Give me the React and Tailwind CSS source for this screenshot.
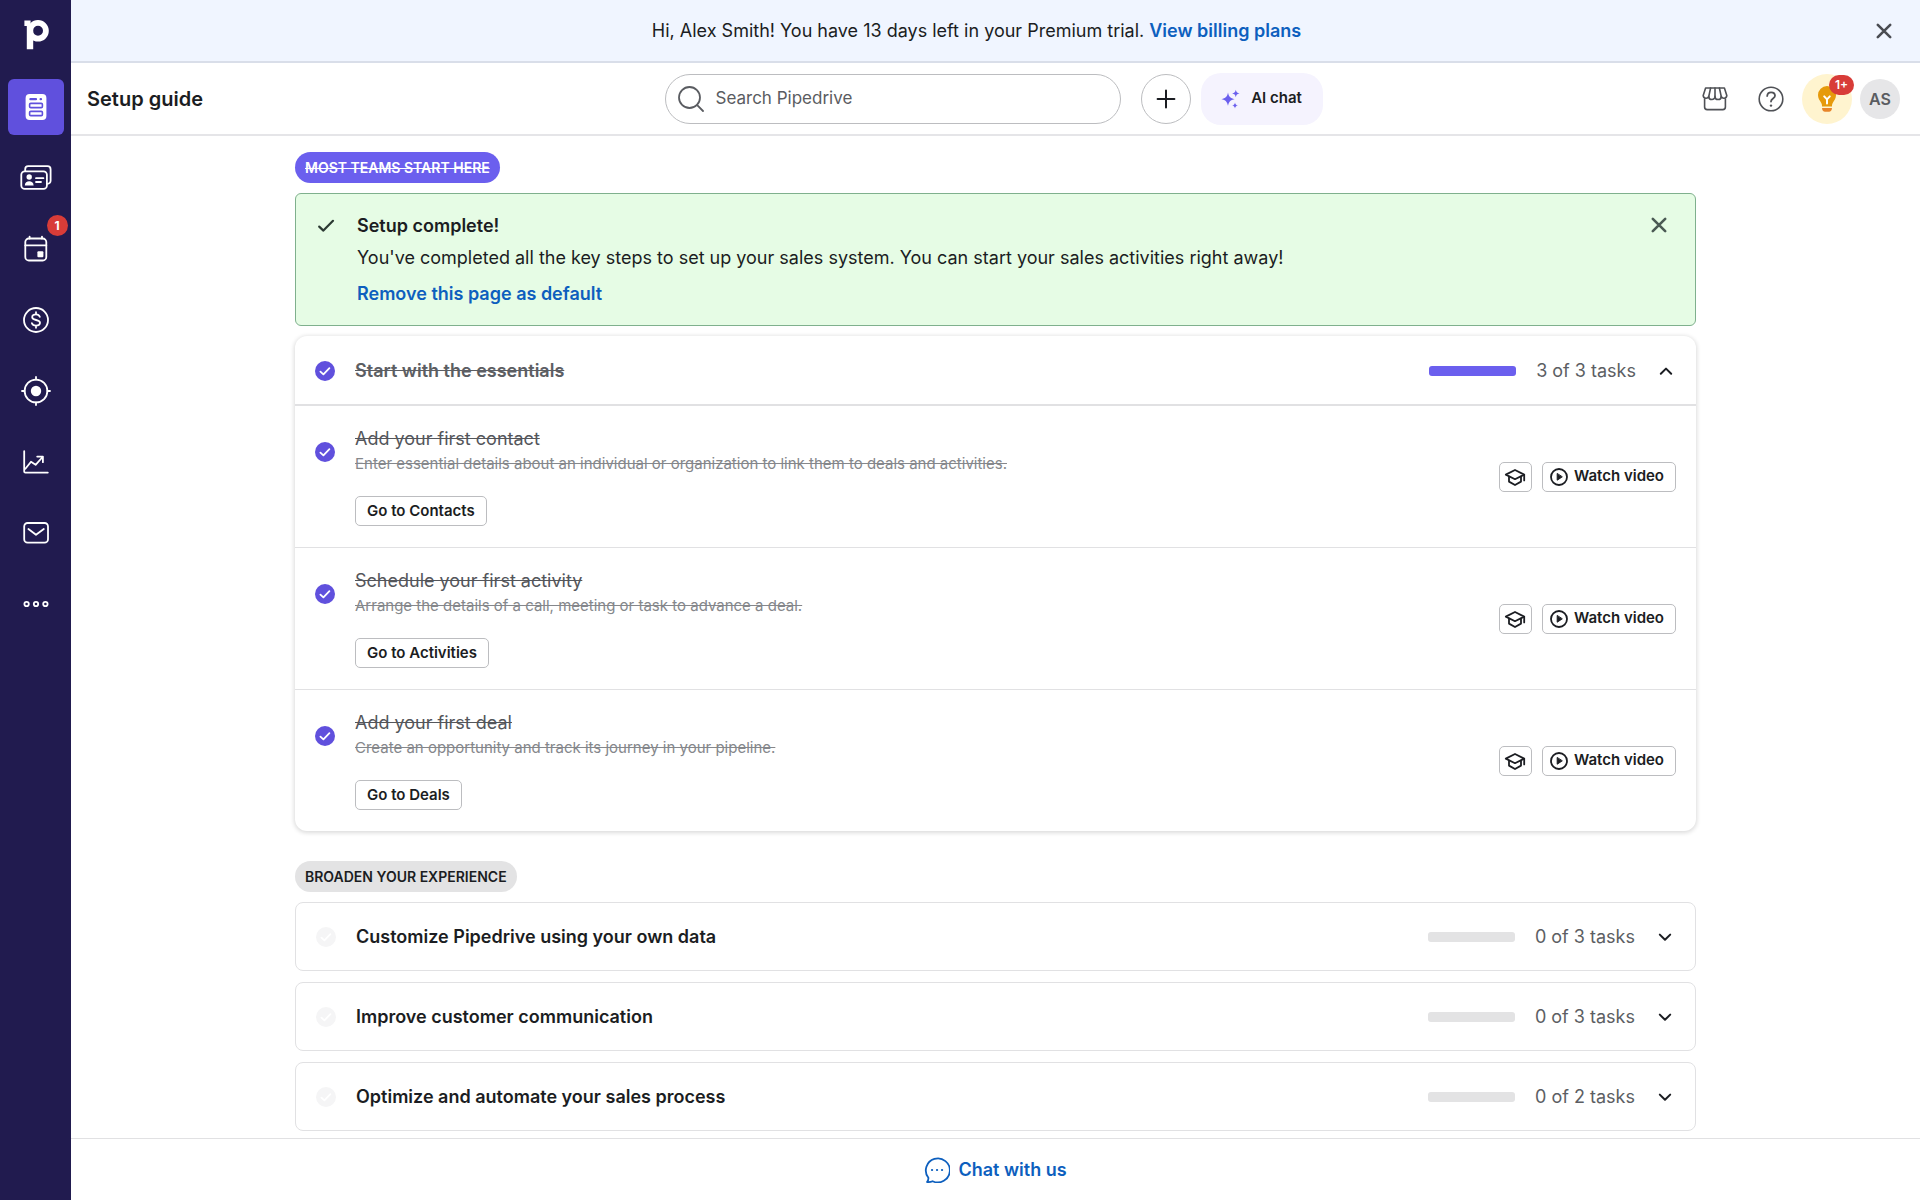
import { useState } from 'react';

const NAV_ITEMS = [
  { label: 'Setup guide', icon: GuideIcon, active: true },
  { label: 'Contacts', icon: ContactsIcon },
  { label: 'Activities', icon: CalendarIcon, badge: '1' },
  { label: 'Deals', icon: DealsIcon },
  { label: 'Leads', icon: TargetIcon },
  { label: 'Insights', icon: InsightsIcon },
  { label: 'Mail', icon: MailIcon },
  { label: 'More', icon: MoreIcon },
];

const ESSENTIALS = [
  {
    title: 'Add your first contact',
    description: 'Enter essential details about an individual or organization to link them to deals and activities.',
    action: 'Go to Contacts',
  },
  {
    title: 'Schedule your first activity',
    description: 'Arrange the details of a call, meeting or task to advance a deal.',
    action: 'Go to Activities',
  },
  {
    title: 'Add your first deal',
    description: 'Create an opportunity and track its journey in your pipeline.',
    action: 'Go to Deals',
  },
];

const SECTIONS = [
  { title: 'Customize Pipedrive using your own data', total: 3 },
  { title: 'Improve customer communication', total: 3 },
  { title: 'Optimize and automate your sales process', total: 2 },
];

function Icon({ size = 32, children, className = '' }) {
  return (
    <svg
      width={size}
      height={size}
      viewBox={`0 0 ${size} ${size}`}
      fill="none"
      stroke="currentColor"
      strokeWidth="1.8"
      strokeLinecap="round"
      strokeLinejoin="round"
      aria-hidden="true"
      className={`shrink-0 ${className}`}
    >
      {children}
    </svg>
  );
}

function Logo() {
  return (
    <svg width="26" height="30" viewBox="0 0 26 30" fill="none" aria-hidden="true">
      <circle cx="15" cy="10.8" r="7.9" stroke="white" strokeWidth="5.8" />
      <path d="M1.4 0.4H7.6V4H10.2V29.2H3.8V6H1.4Z" fill="white" />
    </svg>
  );
}

function GuideIcon() {
  return (
    <Icon>
      <rect x="5.6" y="3" width="20.8" height="26" rx="4" fill="white" stroke="none" />
      <g stroke="#6050dd" strokeWidth="1.6">
        <path d="M10.4 8.2H16M20.6 8.2H21" strokeWidth="2.2" />
        <rect x="9.6" y="12.4" width="12.8" height="4.2" rx="1.2" />
        <rect x="9.6" y="20.4" width="12.8" height="4.2" rx="1.2" />
      </g>
    </Icon>
  );
}

function ContactsIcon() {
  return (
    <Icon>
      <rect x="1.3" y="9.3" width="25.6" height="17.6" rx="3.4" />
      <path d="M5.2 8.8V7.2A3 3 0 0 1 8.2 4.2H27.4A3.2 3.2 0 0 1 30.6 7.4V18.8A3 3 0 0 1 27.6 21.8" />
      <circle cx="9.2" cy="15" r="2.7" fill="currentColor" stroke="none" />
      <path d="M4.8 23.4C4.8 17.8 13.6 17.8 13.6 23.4Z" fill="currentColor" stroke="none" />
      <path d="M16 16.2H23.4M16 20H21" />
    </Icon>
  );
}

function CalendarIcon() {
  return (
    <Icon>
      <rect x="5.3" y="5.5" width="21" height="22" rx="3.6" />
      <path d="M5.3 12.4H26.3M9.6 3.6V5.5M22 3.6V5.5" />
      <rect x="17.4" y="18.2" width="6" height="6" rx="1" fill="currentColor" stroke="none" />
    </Icon>
  );
}

function DealsIcon() {
  return (
    <Icon>
      <circle cx="16" cy="16" r="12" />
      <path d="M19.8 12.8C19.2 11.2 17.8 10.4 16 10.4C13.8 10.4 12.2 11.5 12.2 13.2C12.2 17 20 15 20 18.8C20 20.6 18.3 21.6 16 21.6C14 21.6 12.4 20.8 11.9 19.2M16 8.2V10.4M16 21.6V23.8" />
    </Icon>
  );
}

function TargetIcon() {
  return (
    <Icon>
      <circle cx="16" cy="16" r="11.4" />
      <circle cx="16" cy="16" r="5.2" fill="currentColor" stroke="none" />
      <path d="M16 2V4.6M16 27.4V30M2 16H4.6M27.4 16H30" />
    </Icon>
  );
}

function InsightsIcon() {
  return (
    <Icon>
      <path d="M4.2 5.2V25.4A1.2 1.2 0 0 0 5.4 26.6H27.8" />
      <path d="M5.4 22.8L11 15.8L15.6 18.8L22.6 11M17.2 10.6H22.9V16.2" />
    </Icon>
  );
}

function MailIcon() {
  return (
    <Icon>
      <rect x="4.2" y="6" width="23.8" height="19.6" rx="3.4" />
      <path d="M8.4 12L16 17.8L23.8 12" />
    </Icon>
  );
}

function MoreIcon() {
  return (
    <Icon>
      <circle cx="6.6" cy="16" r="2.2" />
      <circle cx="16" cy="16" r="2.2" />
      <circle cx="25.4" cy="16" r="2.2" />
    </Icon>
  );
}

function CloseIcon() {
  return (
    <Icon size={20}>
      <path d="M3.8 3.8L16.2 16.2M16.2 3.8L3.8 16.2" strokeWidth="2.6" />
    </Icon>
  );
}

function Chevron({ open }) {
  return (
    <Icon size={20}>
      <path d={open ? 'M4.8 12.8L10 7.6L15.2 12.8' : 'M4.8 7.6L10 12.8L15.2 7.6'} strokeWidth="2" />
    </Icon>
  );
}

function CheckCircle({ done }) {
  return (
    <Icon size={20} className={done ? 'text-[#6050dd]' : 'text-[#f5f5f6]'}>
      <circle cx="10" cy="10" r="10" fill="currentColor" stroke="none" />
      <path d="M5.4 10.6L8.4 13.4L14.4 7.2" stroke="white" strokeWidth="1.8" />
    </Icon>
  );
}

function Sidebar() {
  return (
    <aside className="w-[71px] shrink-0 bg-[#211b4f] text-white flex flex-col items-center">
      <a href="#" aria-label="Pipedrive" className="h-[79px] pt-5">
        <Logo />
      </a>
      <nav className="flex flex-col gap-[15px]">
        {NAV_ITEMS.map(({ label, icon: NavIcon, active, badge }) => (
          <a
            key={label}
            href="#"
            aria-label={label}
            className={`relative w-14 h-14 rounded-md flex items-center justify-center ${active ? 'bg-[#6050dd]' : 'hover:bg-white/10'}`}
          >
            <NavIcon />
            {badge && (
              <span className="absolute -top-1.5 -right-1 size-[21px] rounded-full bg-[#d83c38] text-xs font-bold flex items-center justify-center">
                {badge}
              </span>
            )}
          </a>
        ))}
      </nav>
    </aside>
  );
}

function TrialBanner({ onClose }) {
  return (
    <div className="h-[63px] shrink-0 bg-[#f0f5ff] border-b-2 border-[#d9dee9] flex items-center pl-2 pr-[26px]">
      <p className="flex-1 text-center text-lg">
        Hi, Alex Smith! You have 13 days left in your Premium trial.{' '}
        <a href="#" className="font-semibold text-[#0d5fbe]">View billing plans</a>
      </p>
      <button type="button" aria-label="Close" onClick={onClose} className="text-[#4a4c52]">
        <CloseIcon />
      </button>
    </div>
  );
}

function TopBar() {
  return (
    <header className="h-[73px] shrink-0 border-b-2 border-[#e5e5e8] flex items-center pl-4 pr-2">
      <h1 className="flex-1 text-xl font-semibold">Setup guide</h1>

      <div className="flex items-center">
        <label className="w-[456px] h-[50px] rounded-full border border-[#bcbdc0] flex items-center gap-3 px-3 text-[#5a5c61]">
          <Icon size={26}>
            <circle cx="11.5" cy="11.5" r="10.5" />
            <path d="M19.2 19.2L25 25" />
          </Icon>
          <input
            type="text"
            aria-label="Search Pipedrive"
            placeholder="Search Pipedrive"
            className="flex-1 text-[17px] outline-none placeholder-[#5a5c61]"
          />
        </label>
        <button type="button" aria-label="Quick add" className="ml-5 size-[50px] rounded-full border border-[#bcbdc0] flex items-center justify-center">
          <Icon size={20}>
            <path d="M10 1.6V18.4M1.6 10H18.4" strokeWidth="2" />
          </Icon>
        </button>
        <button type="button" className="ml-2.5 w-[122px] h-[52px] rounded-[20px] bg-[#f5f3fe] flex items-center justify-center gap-2.5 text-[15px] font-semibold">
          <svg width="20" height="20" viewBox="0 0 20 20" fill="#6b5fee" aria-hidden="true">
            <path d="M7 3.6C7.8 7.8 9.4 9.4 13.6 10.2C9.4 11 7.8 12.6 7 16.8C6.2 12.6 4.6 11 0.4 10.2C4.6 9.4 6.2 7.8 7 3.6Z" />
            <path d="M14.8 0.8C15.3 3.3 16 4 18.5 4.5C16 5 15.3 5.7 14.8 8.2C14.3 5.7 13.6 5 11.1 4.5C13.6 4 14.3 3.3 14.8 0.8Z" />
            <path d="M14 13.4C14.4 15.4 15 16 17 16.4C15 16.8 14.4 17.4 14 19.4C13.6 17.4 13 16.8 11 16.4C13 16 13.6 15.4 14 13.4Z" />
          </svg>
          AI chat
        </button>
      </div>

      <div className="flex-1 flex items-center justify-end pr-3 text-[#4f5156]">
        <button type="button" aria-label="Marketplace" className="mr-7">
          <Icon size={28}>
            <path d="M4.6 3H23.4L25.8 10.6A2.9 2.9 0 0 1 20.2 11.4A3.1 3.1 0 0 1 14 11.4A3.1 3.1 0 0 1 7.8 11.4A2.9 2.9 0 0 1 2.2 10.6Z" strokeWidth="1.6" />
            <path d="M9.6 3L7.8 11.4M14 3V11.4M18.4 3L20.2 11.4" strokeWidth="1.6" />
            <path d="M3.6 14V22A2.6 2.6 0 0 0 6.2 24.6H21.8A2.6 2.6 0 0 0 24.4 22V14" strokeWidth="1.6" />
          </Icon>
        </button>
        <button type="button" aria-label="Help" className="mr-[17px]">
          <Icon size={28}>
            <circle cx="14" cy="14" r="11.8" strokeWidth="1.6" />
            <path d="M10.2 11C10.4 8.6 12 7.4 14.1 7.4C16.4 7.4 18 8.8 18 10.8C18 13.6 14 13.6 14 16.6" strokeWidth="1.8" />
            <circle cx="14" cy="20.6" r="1.2" fill="currentColor" stroke="none" />
          </Icon>
        </button>
        <button type="button" aria-label="Tips" className="relative size-[50px] rounded-full bg-[#fff4cf] flex items-center justify-center mr-2">
          <svg width="20" height="28" viewBox="0 0 20 28" fill="none" aria-hidden="true">
            <path d="M10 1A9 9 0 0 0 1 10C1 13.2 2.6 15.4 4 17.4C4.8 18.6 5 19.8 5 21.4H15C15 19.8 15.2 18.6 16 17.4C17.4 15.4 19 13.2 19 10A9 9 0 0 0 10 1Z" fill="#e69a0c" />
            <path d="M5 23H15C15 25.4 13.6 26.8 12 26.8H8C6.4 26.8 5 25.4 5 23Z" fill="#e8852a" />
            <path d="M7.2 11.4L10 14.4L12.8 11.4M10 14.4V18.6" stroke="white" strokeWidth="2" strokeLinecap="round" />
          </svg>
          <span className="absolute top-px -right-0.5 w-[25px] h-5 rounded-full bg-[#d83c38] text-white text-xs font-semibold flex items-center justify-center">
            1+
          </span>
        </button>
        <button type="button" className="size-10 rounded-full bg-[#e6e6e8] font-semibold text-[#5a5c61]">AS</button>
      </div>
    </header>
  );
}

function SetupComplete({ onClose }) {
  return (
    <section className="rounded-md border border-[#7fb08d] bg-[#e6fce5] flex items-start gap-[21px] pt-5 pb-[19px] pl-5 pr-[26px]">
      <Icon size={20} className="mt-0.5 text-[#2c3a33]">
        <path d="M3.2 10.6L7.4 14.6L17 4.8" strokeWidth="2.2" />
      </Icon>
      <div className="flex-1 flex flex-col items-start text-lg leading-6">
        <h2 className="font-semibold">Setup complete!</h2>
        <p className="mt-2">
          You've completed all the key steps to set up your sales system. You can start your sales activities right away!
        </p>
        <a href="#" className="mt-3 font-semibold text-[#0d5fbe]">Remove this page as default</a>
      </div>
      <button type="button" aria-label="Close" onClick={onClose} className="mt-px text-[#4b5a54]">
        <CloseIcon />
      </button>
    </section>
  );
}

function SectionHeader({ title, done, total, open, onToggle }) {
  const complete = done === total;

  return (
    <div className="h-[67px] flex items-center gap-5 px-5 text-lg">
      <CheckCircle done={complete} />
      <h2 className={`flex-1 font-semibold ${complete ? 'line-through text-[#5c5e63]' : ''}`}>{title}</h2>
      <div className="w-[87px] h-2.5 rounded-[3px] bg-[#e3e3e4] overflow-hidden">
        <div className="h-full bg-[#6b5fee]" style={{ width: `${(done / total) * 100}%` }} />
      </div>
      <span className="text-[#5c5e63]">{done} of {total} tasks</span>
      <button type="button" aria-label={`Toggle ${title}`} aria-expanded={open} onClick={onToggle}>
        <Chevron open={open} />
      </button>
    </div>
  );
}

function TaskRow({ title, description, action }) {
  return (
    <li className="flex items-center px-5 py-[21px] border-b border-[#e1e1e3] last:border-b-0">
      <div className="flex-1">
        <div className="flex items-center gap-5">
          <CheckCircle done />
          <div>
            <h3 className="text-lg leading-6 line-through text-[#54565b]">{title}</h3>
            <p className="text-[15px] leading-[25px] line-through text-[#85878b]">{description}</p>
          </div>
        </div>
        <button type="button" className="ml-10 mt-5 h-[30px] rounded-[5px] border border-[#bcbdc0] px-[11px] text-[15px] font-semibold flex items-center">
          {action}
        </button>
      </div>
      <div className="flex gap-2.5">
        <button type="button" aria-label="Learn more" className="w-[33px] h-[30px] rounded-[5px] border border-[#bcbdc0] flex items-center justify-center">
          <Icon size={22}>
            <path d="M1.8 8.6L11 4L20.2 8.6L11 13.2Z" />
            <path d="M5 10.6V15.6L11 19L17 15.6V10.6M20.2 8.8V14.4" />
          </Icon>
        </button>
        <button type="button" className="h-[30px] rounded-[5px] border border-[#bcbdc0] pl-[7px] pr-[11px] text-[15px] font-semibold flex items-center gap-1.5">
          <Icon size={18}>
            <circle cx="9" cy="9" r="8" />
            <path d="M7.2 5.8V12.2L12 9Z" fill="currentColor" strokeWidth="1" />
          </Icon>
          Watch video
        </button>
      </div>
    </li>
  );
}

function App() {
  const [showBanner, setShowBanner] = useState(true);
  const [showComplete, setShowComplete] = useState(true);
  const [essentialsOpen, setEssentialsOpen] = useState(true);
  const [openSection, setOpenSection] = useState(null);

  return (
    <div className="h-screen flex bg-white text-[#1b1d22] font-[Inter,sans-serif]">
      <Sidebar />

      <div className="flex-1 min-w-0 flex flex-col">
        {showBanner && <TrialBanner onClose={() => setShowBanner(false)} />}
        <TopBar />

        <main className="flex-1 overflow-y-auto">
          <div className="max-w-[1401px] mx-auto pt-4">
            <p className="w-fit h-[31px] rounded-full bg-[#6b5fee] text-white text-sm font-semibold line-through flex items-center px-2.5">
              MOST TEAMS START HERE
            </p>

            <div className="mt-2.5 flex flex-col gap-2.5">
              {showComplete && <SetupComplete onClose={() => setShowComplete(false)} />}

              {/* Essentials */}
              <section className="pt-px rounded-xl shadow-[0_1px_4px_1px_rgba(0,0,0,0.14)]">
                <SectionHeader
                  title="Start with the essentials"
                  done={3}
                  total={3}
                  open={essentialsOpen}
                  onToggle={() => setEssentialsOpen(!essentialsOpen)}
                />
                {essentialsOpen && (
                  <ul className="border-t-2 border-[#e1e1e3]">
                    {ESSENTIALS.map((task) => (
                      <TaskRow key={task.title} {...task} />
                    ))}
                  </ul>
                )}
              </section>
            </div>

            {/* Broaden your experience */}
            <p className="mt-[30px] w-fit h-[31px] rounded-full bg-[#e3e3e4] text-sm font-semibold flex items-center px-2.5">
              BROADEN YOUR EXPERIENCE
            </p>

            <div className="mt-2.5 flex flex-col gap-[11px]">
              {SECTIONS.map(({ title, total }) => (
                <section key={title} className="rounded-lg border border-[#e1e1e3]">
                  <SectionHeader
                    title={title}
                    done={0}
                    total={total}
                    open={openSection === title}
                    onToggle={() => setOpenSection(openSection === title ? null : title)}
                  />
                </section>
              ))}
            </div>
          </div>
        </main>

        <footer className="h-[62px] shrink-0 border-t border-[#e1e1e3] flex items-center justify-center">
          <button type="button" className="flex items-center gap-2 text-lg font-semibold text-[#0d5fbe]">
            <Icon size={26}>
              <path d="M4.4 20.8A12 12 0 1 1 8.6 24.2C7 25 5 25.2 3 25C4 23.8 4.5 22.4 4.4 20.8Z" />
              <path d="M8 13H8.1M13 13H13.1M18 13H18.1" strokeWidth="2.2" />
            </Icon>
            Chat with us
          </button>
        </footer>
      </div>
    </div>
  );
}

export default App;
